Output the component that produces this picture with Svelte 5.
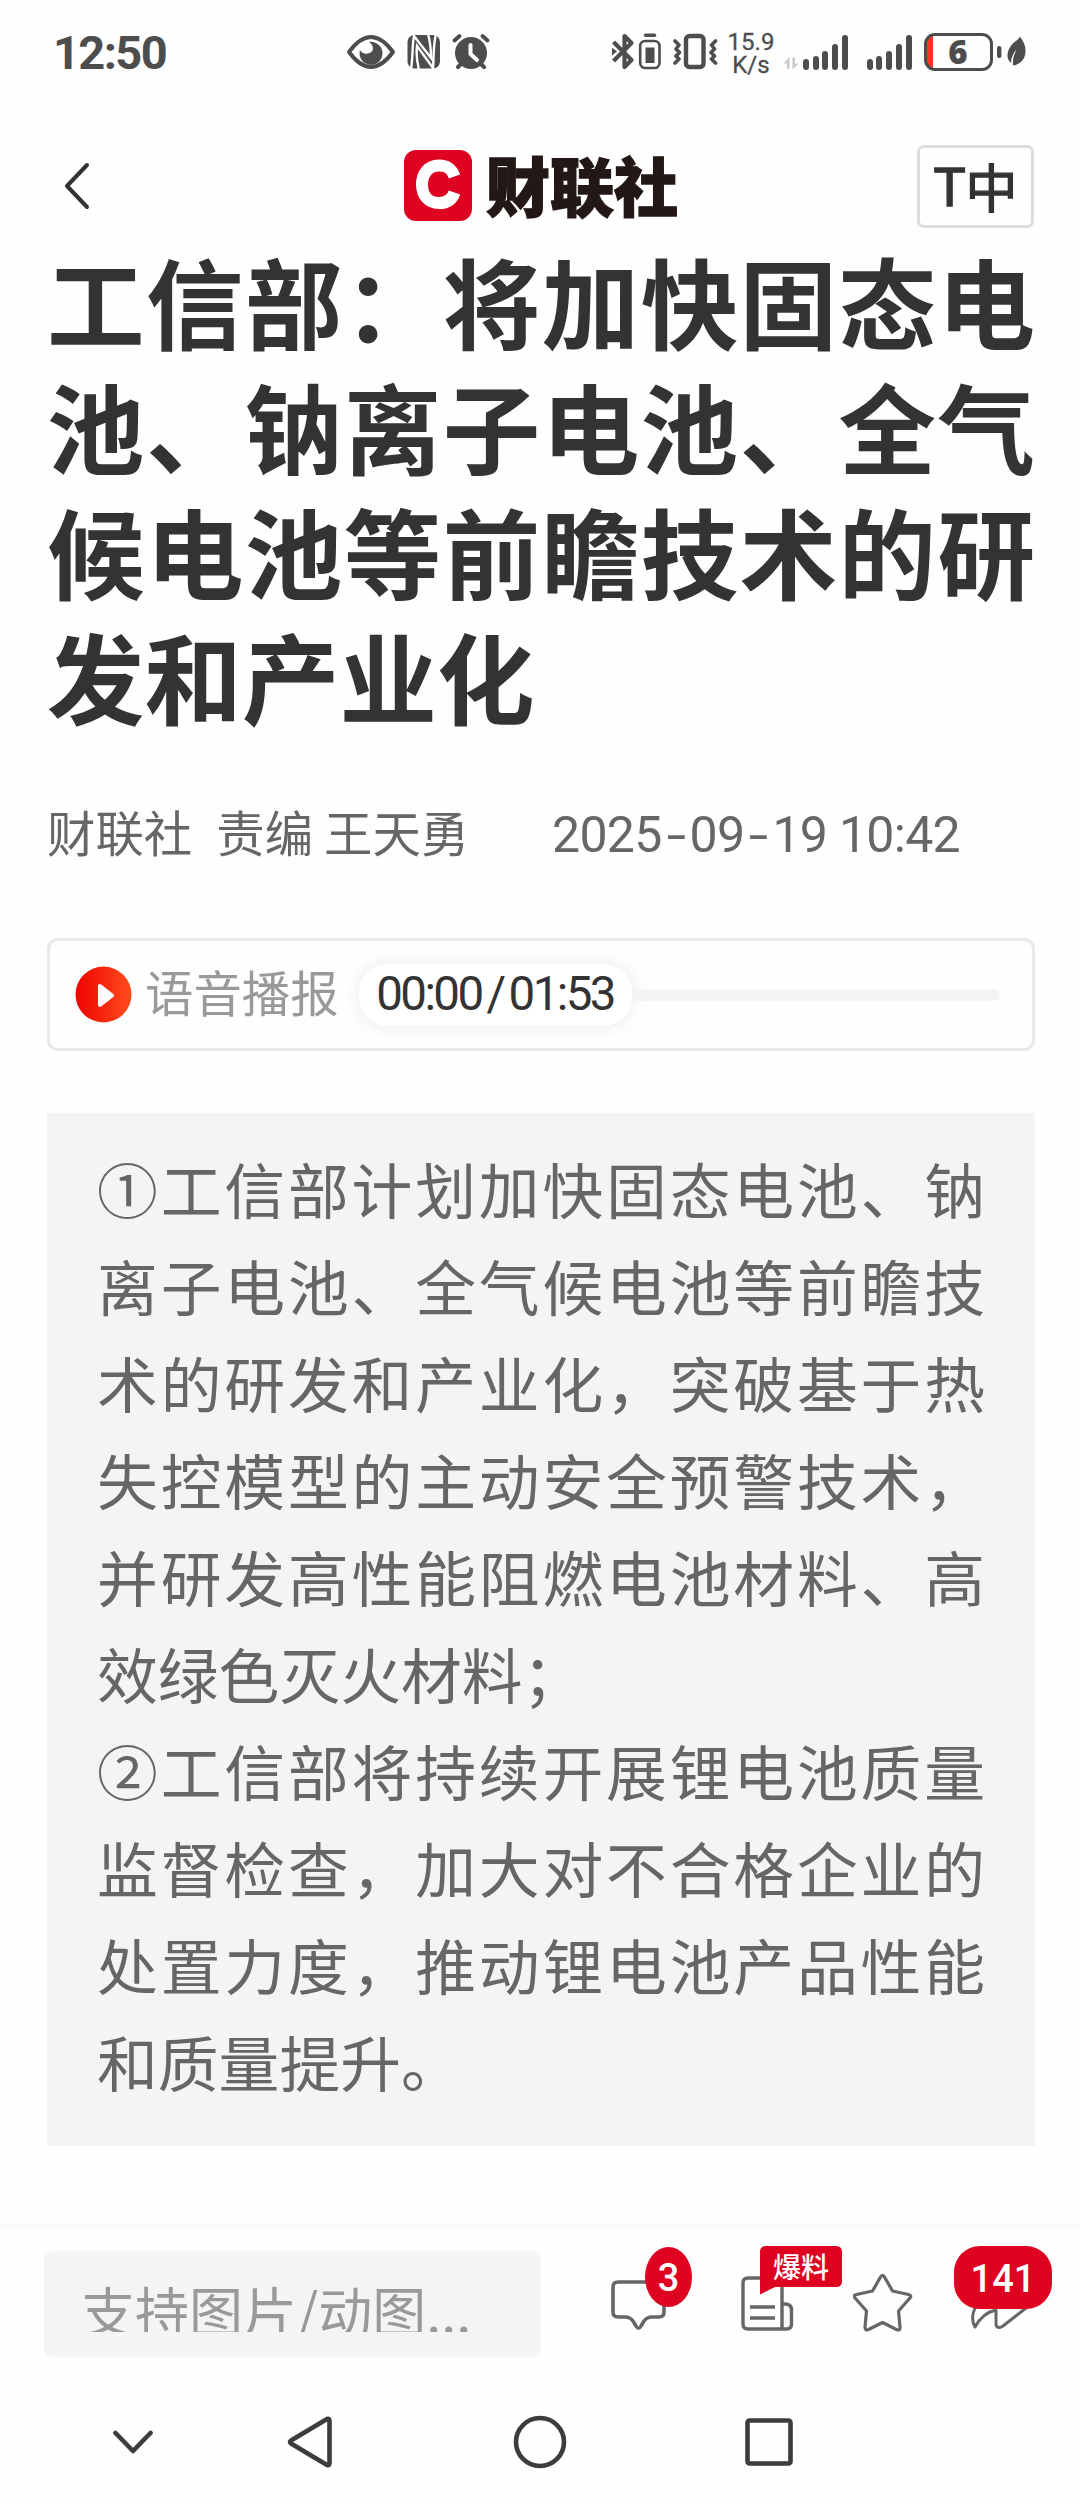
<script>
	const title = '工信部：将加快固态电池、钠离子电池、全气候电池等前瞻技术的研发和产业化';

	const summary = [
		'①工信部计划加快固态电池、钠离子电池、全气候电池等前瞻技术的研发和产业化，突破基于热失控模型的主动安全预警技术，并研发高性能阻燃电池材料、高效绿色灭火材料；',
		'②工信部将持续开展锂电池质量监督检查，加大对不合格企业的处置力度，推动锂电池产品性能和质量提升。'
	];

	const bars = [11, 14, 19, 26, 35];

	let comments = 3;
	let shares = 141;
</script>

<div class="screen" lang="zh-CN">
	<div class="status">
		<span class="time">12:50</span>

		<svg class="eye" viewBox="346 33 50 37" width="50" height="37">
			<path d="M349 52Q371 22 393 52Q371 82 349 52Z" fill="none" stroke="#4d4d4d" stroke-width="4" stroke-linejoin="round" />
			<path d="M369 42a11.500 11.500 0 1 1-9 8c2 5 12 5 13-1c0-3-1-5-4-7z" fill="#4d4d4d" />
		</svg>

		<svg class="nfc" viewBox="407 34 34 35" width="34" height="35">
			<rect x="407.500" y="35" width="32.500" height="33.500" rx="7" fill="#4d4d4d" />
			<path d="M411 69C413 58 412 46 414 36L431 58C431 50 430 41 428 34M436 34C433 45 434 57 433 68L417 46C416 54 417 62 419 70" fill="none" stroke="#fff" stroke-width="2.400" />
		</svg>

		<svg class="alarm" viewBox="451 33 40 37" width="40" height="37">
			<circle cx="471" cy="53" r="16" fill="#4d4d4d" />
			<path d="M454.500 40.500l5-4.500M487.500 40.500l-5-4.500M462 63l-4 4M480 63l4 4" stroke="#4d4d4d" stroke-width="4" stroke-linecap="round" />
			<path d="M470.500 45v9l6.500 6" fill="none" stroke="#fff" stroke-width="4" stroke-linecap="round" stroke-linejoin="round" />
		</svg>

		<svg class="bluetooth" viewBox="611 33 52 37" width="52" height="37">
			<path d="M613.500 42l18 18-7 7V36l7 7-18 18" fill="none" stroke="#4d4d4d" stroke-width="4.200" stroke-linejoin="round" />
			<path d="M612 47.500l5 4-5 4z" fill="#4d4d4d" />
			<rect x="640.200" y="41" width="19.300" height="27" rx="5" fill="none" stroke="#4d4d4d" stroke-width="2.600" />
			<path d="M645.500 35.300h9" stroke="#4d4d4d" stroke-width="3.400" stroke-linecap="round" />
			<rect x="645.500" y="47.500" width="9" height="15.500" fill="#4d4d4d" />
		</svg>

		<svg class="vibrate" viewBox="672 33 46 37" width="46" height="37">
			<rect x="686" y="36" width="17.500" height="31" rx="3.500" fill="none" stroke="#4d4d4d" stroke-width="4.400" />
			<path d="M675 41l4 4-3 4 3.500 3.500-3.500 3.500 3 3-4 4M715.500 41l-4 4 3 4-3.500 3.500 3.500 3.500-3 3 4 4" fill="none" stroke="#4d4d4d" stroke-width="3.600" stroke-linecap="round" stroke-linejoin="round" />
		</svg>

		<div class="speed">
			<span>15.9</span>
			<span>K/s</span>
		</div>

		<svg class="transfer" viewBox="783 57 16 13" width="16" height="13">
			<path d="M783.500 63.500l6-6.500v12h-2.500v-5.500zM798.500 63.500l-6 6V57.500h2.500v6z" fill="#c8c8c8" />
		</svg>

		{#each [0, 1] as sim}
			<div class="signal" class:second={sim === 1}>
				{#each bars as height}
					<i style="height: {height}px"></i>
				{/each}
			</div>
		{/each}

		<div class="battery"><span>6</span></div>

		<svg class="leaf" viewBox="997 36 30 31" width="30" height="31">
			<rect x="997" y="46" width="4.400" height="12" rx="2" fill="#4d4d4d" />
			<path d="M1020 36.500c-1 4-12 7-12.500 19-.1 4 2 6 3.500 7.500 0-5 2-9.500 5.500-13.500-3 6-4 11-3.500 16 8-1.500 12.500-6.500 12.500-15 0-6-3-10-5.500-14z" fill="#4d4d4d" />
		</svg>
	</div>

	<header>
		<svg class="back" viewBox="0 0 26 48" width="26" height="48">
			<path d="M23 3L3 24l20 21" fill="none" stroke="#333" stroke-width="4" stroke-linecap="round" stroke-linejoin="round" />
		</svg>

		<div class="brand">
			<svg viewBox="0 0 68 71" width="68" height="71">
				<rect width="68" height="71" rx="12" fill="#de0321" />
				<path d="M50.500 26.500C47 17 41 15.500 35 15.500C24 15.500 18 24 18 34.500C18 45 24 53 35 53C42 53 48 50 50.500 42.500" fill="none" stroke="#fff" stroke-width="12" />
			</svg>
			<span>财联社</span>
		</div>

		<button class="font-size"><span>T</span>中</button>
	</header>

	<article>
		<h1>{title}</h1>

		<div class="meta">
			<span class="editor">财联社&ensp;责编 王天勇</span>
			<time>2025<i>-</i>09<i>-</i>19 10:42</time>
		</div>

		<div class="player">
			<svg viewBox="0 0 57 57" width="57" height="57">
				<defs>
					<linearGradient id="play" x1="0" x2="1">
						<stop offset="0.100" stop-color="#f00a05" />
						<stop offset="1" stop-color="#ff4d1c" />
					</linearGradient>
				</defs>
				<circle cx="28.500" cy="28.500" r="28" fill="url(#play)" />
				<path d="M25 20v19l12-9.500z" fill="#fff" stroke="#fff" stroke-width="4" stroke-linejoin="round" />
			</svg>
			<span class="label">语音播报</span>
			<span class="clock">00:00<b>/</b>01:53</span>
			<div class="track"></div>
		</div>

		<div class="summary">
			{#each summary as point}
				<p>{point}</p>
			{/each}
		</div>
	</article>

	<footer>
		<div class="input"><span>支持图片/动图...</span></div>

		<div class="action comment">
			<svg viewBox="609 2278 58 54" width="58" height="54">
				<path d="M618 2282h41q5 0 5 5v25q0 5-5 5h-7q-5 0-8 4l-3 5q-2.500 4.500-5 0l-3-5q-3-4-8-4h-7q-5 0-5-5v-25q0-5 5-5z" fill="none" stroke="#666" stroke-width="3.600" />
			</svg>
			<em>{comments}</em>
		</div>

		<div class="action news">
			<svg viewBox="740 2244 104 88" width="104" height="88">
				<path d="M782 2280v49h-34q-5 0-5-5v-41q0-5 5-5h29q5 0 5 5M782 2304h3q6.500 0 6.500 6v14q0 5-5 5H780M750 2307h25M750 2318h25" fill="none" stroke="#666" stroke-width="3.400" />
				<path d="M766 2246h70q6 0 6 6v29q0 6-6 6h-61l-15 7.500V2252q0-6 6-6z" fill="#de0321" />
			</svg>
			<small>爆料</small>
		</div>

		<div class="action star">
			<svg viewBox="853 2273 60 60" width="60" height="60">
				<path d="M880.500 2277q2-3.500 4 0l8 14 16 3.500q4 1 1 4l-11 12.500 1.500 16q.2 4-3.500 2.500l-14-7-14 7q-3.500 1.500-3.500-2.500l1.500-16-11-12.500q-3-3 1-4l16-3.500z" fill="none" stroke="#666" stroke-width="3.200" stroke-linejoin="round" />
			</svg>
		</div>

		<div class="action share">
			<svg viewBox="970 2280 62 50" width="62" height="50">
				<path d="M975 2327c-5-9-3-28 21-33v-8c0-4 3-5 6-2l24 17c3 2 3 5 0 7l-23 18c-4 3-7 1-7-2v-14c-10 2-16 8-21 17z" fill="none" stroke="#666" stroke-width="3" stroke-linejoin="round" />
			</svg>
			<em>{shares}</em>
		</div>
	</footer>

	<nav>
		<svg class="down" viewBox="0 0 40 24" width="40" height="24">
			<path d="M2.500 3L20 21 37.500 3" />
		</svg>
		<svg class="prev" viewBox="0 0 46 54" width="46" height="54">
			<path d="M40 4L4 25.500q-2 1.500 0 3L40 50q2.500 1 2.500-2V6q0-3-2.500-2z" />
		</svg>
		<svg class="home" viewBox="0 0 54 54" width="54" height="54">
			<circle cx="27" cy="27" r="24" />
		</svg>
		<svg class="recent" viewBox="0 0 48 48" width="48" height="48">
			<rect x="2.500" y="2.500" width="43" height="43" rx="2" />
		</svg>
	</nav>
</div>

<style>
	:global(body) {
		margin: 0;
		background: #fefefe;
	}

	.screen {
		width: 1080px;
		height: 2504px;
		overflow: hidden;
		display: flex;
		flex-direction: column;
		background: #fefefe;
		font-family: Roboto, 'Noto Sans CJK SC', sans-serif;
		color: #333;
	}

	svg {
		display: block;
		flex: none;
	}

	.status {
		height: 104px;
		box-sizing: border-box;
		padding-top: 33px;
		display: flex;
		align-items: flex-start;
		color: #4d4d4d;
	}

	.time {
		width: 293px;
		padding-left: 53px;
		line-height: 40px;
		font-size: 47px;
		font-weight: 700;
		letter-spacing: -1.6px;
	}

	.nfc {
		margin: 1px 10px 0 11px;
	}

	.bluetooth {
		margin-left: 120px;
	}

	.vibrate {
		margin-left: 9px;
	}

	.speed {
		width: 54px;
		margin: -2px 0 0 6px;
		font-size: 24px;
		line-height: 23px;
		display: flex;
		flex-direction: column;
		align-items: center;
		white-space: nowrap;
		-webkit-text-stroke: 0.3px #4d4d4d;
	}

	.speed span {
		width: 54px;
		text-align: center;
	}

	.transfer {
		margin: 24px 4px 0 5px;
	}

	.signal {
		height: 37px;
		display: flex;
		align-items: flex-end;
		gap: 3.7px;
	}

	.signal i {
		width: 6px;
		border-radius: 3px;
		background: #4d4d4d;
	}

	.second {
		margin: 0 12px 0 19px;
	}

	.battery {
		width: 69px;
		height: 38px;
		box-sizing: border-box;
		border: 3px solid #4d4d4d;
		border-radius: 11px;
		background: linear-gradient(90deg, #fb3524 6px, transparent 6px);
		text-align: center;
		font: 700 33px/31px 'Open Sans', sans-serif;
	}

	.battery span {
		display: block;
		font-weight: 800;
	}

	.leaf {
		margin: 3px 0 0 4px;
	}

	header {
		height: 133px;
		display: flex;
		align-items: flex-start;
	}

	.back {
		margin: 58px 0 0 64px;
	}

	.brand {
		display: flex;
		width: 513px;
		margin: 46px 0 0 314px;
	}

	.brand span {
		margin: -1px 0 0 14px;
		font: 900 64px/68px 'Noto Sans CJK SC', sans-serif;
		color: #231815;
		-webkit-text-stroke: 1.4px #231815;
	}

	.font-size {
		width: 117px;
		height: 83px;
		margin: 41px 0 0;
		padding: 0 0 2px;
		display: flex;
		align-items: center;
		justify-content: center;
		border: 3px solid #ddd;
		border-radius: 7px;
		background: none;
		color: #333;
		font: 400 52px/70px 'Noto Sans CJK SC', sans-serif;
		-webkit-text-stroke: 1.3px #333;
	}

	.font-size span {
		margin-top: 5px;
		font: 400 54px/70px Roboto, sans-serif;
	}

	article {
		width: 988px;
		height: 1987px;
		margin: 0 45px 0 47px;
	}

	h1 {
		margin: 0;
		font: 700 97.500px/125px 'Noto Sans CJK SC', sans-serif;
		text-align: justify;
	}

	.meta {
		display: flex;
		height: 70px;
		margin-top: 59px;
		font-size: 48.400px;
		line-height: 70px;
		color: #666;
		white-space: nowrap;
	}

	.editor {
		width: 505px;
		font-family: 'Noto Sans CJK SC', sans-serif;
	}

	time {
		padding-top: 4px;
		font-size: 50px;
		letter-spacing: -0.7px;
	}

	time i {
		display: inline-block;
		width: 28px;
		font-style: normal;
		text-align: center;
		transform: scaleX(1.4);
	}

	.player {
		height: 113px;
		margin-top: 72px;
		box-sizing: border-box;
		border: 3px solid #e8e8e8;
		border-radius: 11px;
		display: flex;
		align-items: center;
		padding: 0 32px 0 25px;
	}

	.label {
		margin: -7px 20px 0 13px;
		font-size: 48.400px;
		color: #999;
	}

	.clock {
		width: 273px;
		height: 62px;
		border-radius: 28px;
		background: #fff;
		box-shadow: 0 0 17px rgba(0, 0, 0, 0.09);
		text-align: center;
		font-size: 47.500px;
		line-height: 60px;
		letter-spacing: -2.6px;
	}

	.clock b {
		margin: 0 5px;
		font-weight: 400;
	}

	.track {
		flex: 1;
		height: 12px;
		border-radius: 0 6px 6px 0;
		background: #f4f4f4;
	}

	.summary {
		height: 1033px;
		margin-top: 62px;
		box-sizing: border-box;
		padding: 26px 50px 0;
		background: #f4f4f4;
		color: #666;
		font: 60.800px/97px 'Noto Sans CJK SC', sans-serif;
		text-align: justify;
	}

	.summary p {
		margin: 0;
	}

	footer {
		height: 162px;
		box-sizing: border-box;
		border-top: 3px solid #f9f9f9;
		padding: 19px 0 0 44px;
		display: flex;
	}

	.input {
		width: 497px;
		height: 106px;
		margin-top: 5px;
		box-sizing: border-box;
		padding: 26px 40px 0 37px;
		border-radius: 9px;
		background: #f4f4f4;
		color: #999;
	}

	/* the label is taller than its line, so its feet are clipped */
	.input span {
		display: block;
		height: 55px;
		overflow: hidden;
		font: 54px/65px 'Noto Sans CJK SC', sans-serif;
		white-space: nowrap;
	}

	.action {
		position: relative;
		height: 88px;
	}

	.comment {
		margin-left: 68px;
		padding-top: 32px;
		box-sizing: border-box;
	}

	.news {
		margin: -2px 9px 0 73px;
	}

	.star {
		padding-top: 27px;
	}

	.share {
		margin-left: 57px;
		padding-top: 34px;
	}

	.action em {
		position: absolute;
		top: 1px;
		left: 36px;
		width: 47px;
		height: 60px;
		border-radius: 50%;
		background: #de0321;
		color: #fff;
		text-align: center;
		font: 500 38px/62px Roboto, sans-serif;
	}

	.share em {
		left: -16px;
		top: 0;
		width: 98px;
		height: 63px;
		border-radius: 26px;
		line-height: 67px;
	}

	.action small {
		position: absolute;
		top: 1px;
		left: 20px;
		width: 82px;
		text-align: center;
		font: 500 28px/42px 'Noto Sans CJK SC', sans-serif;
		color: #fff;
	}

	nav {
		display: flex;
		align-items: center;
		height: 112px;
	}

	nav svg {
		fill: none;
		stroke: #3c3c3c;
		stroke-width: 4.600;
		stroke-linecap: round;
		stroke-linejoin: round;
	}

	.down {
		margin-left: 113px;
	}

	.prev {
		margin-left: 134px;
	}

	.home {
		margin-left: 180px;
	}

	.recent {
		margin-left: 178px;
	}
</style>
